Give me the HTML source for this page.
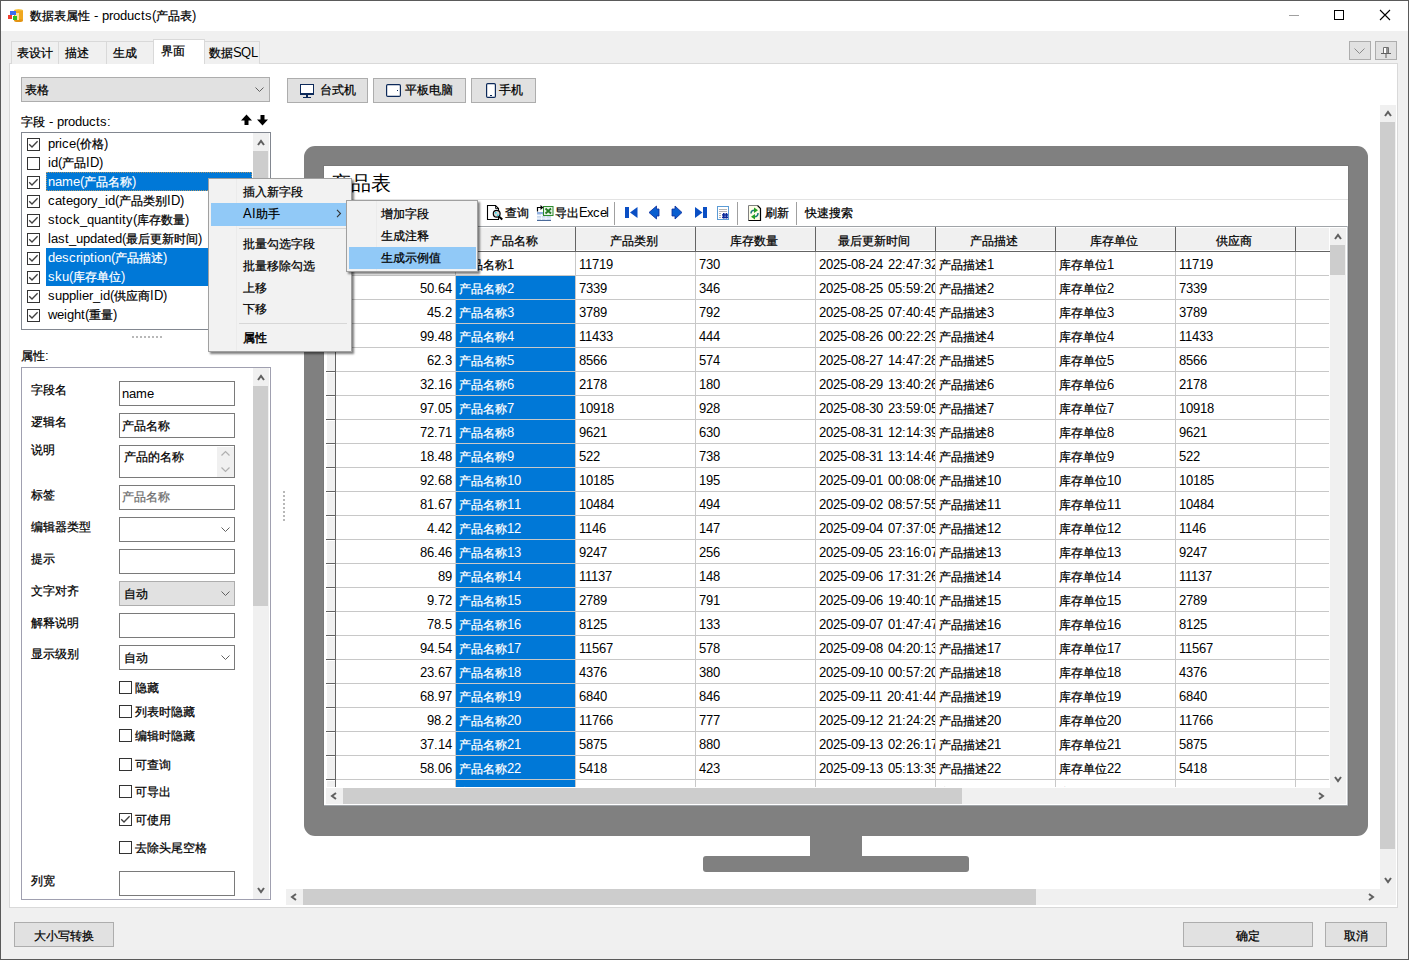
<!DOCTYPE html>
<html><head><meta charset="utf-8">
<style>
@font-face{font-family:"Liberation Sans";src:local("Liberation Sans"),local("LiberationSans");size-adjust:108%}
html,body{margin:0;padding:0}
body{width:1410px;height:962px;position:relative;overflow:hidden;background:#fff;font-family:"Liberation Sans",sans-serif;font-size:12px;color:#000}
div,svg,span{position:absolute;box-sizing:border-box}
.t{white-space:nowrap;line-height:12px;font-size:12px}
.c{position:relative;top:-0.5px;-webkit-text-stroke:0.25px currentColor}
.s{position:static}
</style></head><body>

<div style="left:0px;top:0px;width:1410px;height:962px;background:#fff"></div>
<div style="left:0px;top:0px;width:1409px;height:960px;background:#5a5a5a"></div>
<div style="left:1px;top:1px;width:1407px;height:30px;background:#fff"></div>
<div style="left:1px;top:31px;width:1407px;height:928px;background:#f0f0f0"></div>
<svg style="left:7px;top:8px" width="17" height="15">
<ellipse cx="11.5" cy="2.5" rx="4.5" ry="1.6" fill="#f7c84a"/>
<rect x="7" y="2.5" width="9" height="10" fill="#f0a820"/>
<ellipse cx="11.5" cy="12.5" rx="4.5" ry="1.6" fill="#e39412"/>
<rect x="8" y="5" width="4" height="7" fill="#fbe39a"/>
<rect x="3" y="3" width="6" height="4" fill="#3a6cf0"/>
<rect x="1" y="7" width="4" height="4" fill="#f04030"/>
<rect x="6" y="8" width="4" height="4" fill="#30c020"/>
</svg>
<span class="t" style="left:30px;top:10px;"><span class="c">数据表属性</span> - products(<span class="c">产品表</span>)</span>
<div style="left:1289px;top:15px;width:10px;height:1px;background:#a0a0a0"></div>
<div style="left:1334px;top:10px;width:10px;height:10px;border:1px solid #000"></div>
<svg style="left:1379px;top:9px" width="13" height="13"><path d="M1 1 L11 11 M11 1 L1 11" stroke="#000" stroke-width="1.1"/></svg>
<div style="left:9px;top:63px;width:1389px;height:845px;background:#fff;border:1px solid #d9d9d9"></div>
<div style="left:11px;top:41px;width:48px;height:23px;background:#f0f0f0;border:1px solid #d9d9d9;border-bottom:none"></div>
<span class="t" style="left:17px;top:47px;"><span class="c">表设计</span></span>
<div style="left:58px;top:41px;width:49px;height:23px;background:#f0f0f0;border:1px solid #d9d9d9;border-bottom:none"></div>
<span class="t" style="left:65px;top:47px;"><span class="c">描述</span></span>
<div style="left:106px;top:41px;width:48px;height:23px;background:#f0f0f0;border:1px solid #d9d9d9;border-bottom:none"></div>
<span class="t" style="left:113px;top:47px;"><span class="c">生成</span></span>
<div style="left:204px;top:41px;width:56px;height:23px;background:#f0f0f0;border:1px solid #d9d9d9;border-bottom:none"></div>
<span class="t" style="left:209px;top:47px;"><span class="c">数据</span><span class="s" style="letter-spacing:-0.6px">SQL</span></span>
<div style="left:153px;top:39px;width:52px;height:25px;background:#fff;border:1px solid #d9d9d9;border-bottom:none"></div>
<div style="left:154px;top:63px;width:50px;height:2px;background:#fff"></div>
<span class="t" style="left:161px;top:45px;"><span class="c">界面</span></span>
<div style="left:1349px;top:41px;width:22px;height:19px;background:#e1e1e1;border:1px solid #adadad"></div>
<svg style="left:1354px;top:48px" width="12" height="7"><path d="M0.5 0.5 L5.5 5.5 L10.5 0.5" fill="none" stroke="#8a8a8a" stroke-width="1"/></svg>
<div style="left:1375px;top:41px;width:22px;height:19px;background:#e1e1e1;border:1px solid #adadad"></div>
<svg style="left:1381px;top:47px" width="10" height="12"><path d="M2.5 0.5 H7.5 V6.5 H2.5 Z" fill="#fff" stroke="#707070"/><rect x="5" y="1" width="2" height="5" fill="#909090"/><path d="M0 6.5 H10 M5 6.5 V11" stroke="#606060" stroke-width="1"/></svg>
<div style="left:21px;top:77px;width:249px;height:25px;background:#e1e1e1;border:1px solid #adadad"></div>
<span class="t" style="left:25px;top:84px;"><span class="c">表格</span></span>
<svg style="left:255px;top:87px" width="9" height="5"><path d="M0.5 0.5 L4.5 4.5 L8.5 0.5" fill="none" stroke="#606060" stroke-width="1"/></svg>
<span class="t" style="left:21px;top:116px;"><span class="c">字段</span> - products:</span>
<svg style="left:240px;top:114px" width="30" height="12"><path d="M6.5 0.5 L12 6.5 H8.5 V11 H4.5 V6.5 H1 Z" fill="#000"/><path d="M22.5 11.5 L28 5.5 H24.5 V1 H20.5 V5.5 H17 Z" fill="#000"/></svg>
<div style="left:21px;top:132px;width:250px;height:198px;background:#fff;border:1px solid #828790"></div>
<div style="left:27px;top:138px;width:13px;height:13px;border:1px solid #333;background:#fff"></div>
<svg style="left:27px;top:138px" width="13" height="13"><path d="M2.2 6.2 L5 9 L10.6 3.2" fill="none" stroke="#404040" stroke-width="1.3"/></svg>
<span class="t" style="left:48px;top:138px;">price(<span class="c">价格</span>)</span>
<div style="left:27px;top:157px;width:13px;height:13px;border:1px solid #333;background:#fff"></div>
<span class="t" style="left:48px;top:157px;">id(<span class="c">产品</span>ID)</span>
<div style="left:46px;top:172px;width:206px;height:19px;background:#0078d7"></div>
<div style="left:27px;top:176px;width:13px;height:13px;border:1px solid #333;background:#fff"></div>
<svg style="left:27px;top:176px" width="13" height="13"><path d="M2.2 6.2 L5 9 L10.6 3.2" fill="none" stroke="#404040" stroke-width="1.3"/></svg>
<span class="t" style="left:48px;top:176px;color:#fff">name(<span class="c">产品名称</span>)</span>
<div style="left:27px;top:195px;width:13px;height:13px;border:1px solid #333;background:#fff"></div>
<svg style="left:27px;top:195px" width="13" height="13"><path d="M2.2 6.2 L5 9 L10.6 3.2" fill="none" stroke="#404040" stroke-width="1.3"/></svg>
<span class="t" style="left:48px;top:195px;">category_id(<span class="c">产品类别</span>ID)</span>
<div style="left:27px;top:214px;width:13px;height:13px;border:1px solid #333;background:#fff"></div>
<svg style="left:27px;top:214px" width="13" height="13"><path d="M2.2 6.2 L5 9 L10.6 3.2" fill="none" stroke="#404040" stroke-width="1.3"/></svg>
<span class="t" style="left:48px;top:214px;">stock_quantity(<span class="c">库存数量</span>)</span>
<div style="left:27px;top:233px;width:13px;height:13px;border:1px solid #333;background:#fff"></div>
<svg style="left:27px;top:233px" width="13" height="13"><path d="M2.2 6.2 L5 9 L10.6 3.2" fill="none" stroke="#404040" stroke-width="1.3"/></svg>
<span class="t" style="left:48px;top:233px;">last_updated(<span class="c">最后更新时间</span>)</span>
<div style="left:46px;top:248px;width:206px;height:19px;background:#0078d7"></div>
<div style="left:27px;top:252px;width:13px;height:13px;border:1px solid #333;background:#fff"></div>
<svg style="left:27px;top:252px" width="13" height="13"><path d="M2.2 6.2 L5 9 L10.6 3.2" fill="none" stroke="#404040" stroke-width="1.3"/></svg>
<span class="t" style="left:48px;top:252px;color:#fff">description(<span class="c">产品描述</span>)</span>
<div style="left:46px;top:267px;width:206px;height:19px;background:#0078d7"></div>
<div style="left:27px;top:271px;width:13px;height:13px;border:1px solid #333;background:#fff"></div>
<svg style="left:27px;top:271px" width="13" height="13"><path d="M2.2 6.2 L5 9 L10.6 3.2" fill="none" stroke="#404040" stroke-width="1.3"/></svg>
<span class="t" style="left:48px;top:271px;color:#fff">sku(<span class="c">库存单位</span>)</span>
<div style="left:27px;top:290px;width:13px;height:13px;border:1px solid #333;background:#fff"></div>
<svg style="left:27px;top:290px" width="13" height="13"><path d="M2.2 6.2 L5 9 L10.6 3.2" fill="none" stroke="#404040" stroke-width="1.3"/></svg>
<span class="t" style="left:48px;top:290px;">supplier_id(<span class="c">供应商</span>ID)</span>
<div style="left:27px;top:309px;width:13px;height:13px;border:1px solid #333;background:#fff"></div>
<svg style="left:27px;top:309px" width="13" height="13"><path d="M2.2 6.2 L5 9 L10.6 3.2" fill="none" stroke="#404040" stroke-width="1.3"/></svg>
<span class="t" style="left:48px;top:309px;">weight(<span class="c">重量</span>)</span>
<div style="left:46px;top:172px;width:206px;height:19px;border:1px dotted #f0a040;opacity:.7"></div>
<div style="left:253px;top:133px;width:16px;height:196px;background:#f0f0f0"></div>
<div style="left:253px;top:151px;width:15px;height:178px;background:#cdcdcd"></div>
<svg style="left:253px;top:134px" width="16" height="16"><path d="M5 11 L8 7 L11 11" fill="none" stroke="#606060" stroke-width="2"/></svg>
<div style="left:132px;top:336px;width:30px;height:2px;background:repeating-linear-gradient(90deg,#b8b8b8 0 2px,transparent 2px 4px)"></div>
<span class="t" style="left:21px;top:350px;"><span class="c">属性</span>:</span>
<div style="left:21px;top:367px;width:250px;height:533px;background:#fff;border:1px solid #a0a0b0"></div>
<div style="left:253px;top:368px;width:16px;height:531px;background:#f0f0f0"></div>
<div style="left:253px;top:386px;width:15px;height:220px;background:#cdcdcd"></div>
<svg style="left:253px;top:369px" width="16" height="16"><path d="M5 11 L8 7 L11 11" fill="none" stroke="#606060" stroke-width="2"/></svg>
<svg style="left:253px;top:881px" width="16" height="16"><path d="M5 7 L8 11 L11 7" fill="none" stroke="#606060" stroke-width="2"/></svg>
<span class="t" style="left:31px;top:384px;"><span class="c">字段名</span></span>
<span class="t" style="left:31px;top:416px;"><span class="c">逻辑名</span></span>
<span class="t" style="left:31px;top:444px;"><span class="c">说明</span></span>
<span class="t" style="left:31px;top:489px;"><span class="c">标签</span></span>
<span class="t" style="left:31px;top:521px;"><span class="c">编辑器类型</span></span>
<span class="t" style="left:31px;top:553px;"><span class="c">提示</span></span>
<span class="t" style="left:31px;top:585px;"><span class="c">文字对齐</span></span>
<span class="t" style="left:31px;top:617px;"><span class="c">解释说明</span></span>
<span class="t" style="left:31px;top:648px;"><span class="c">显示级别</span></span>
<span class="t" style="left:31px;top:875px;"><span class="c">列宽</span></span>
<div style="left:119px;top:381px;width:116px;height:25px;background:#fff;border:1px solid #7a7a7a"></div>
<span class="t" style="left:122px;top:388px;">name</span>
<div style="left:119px;top:413px;width:116px;height:25px;background:#fff;border:1px solid #7a7a7a"></div>
<span class="t" style="left:122px;top:420px;"><span class="c">产品名称</span></span>
<div style="left:119px;top:445px;width:116px;height:33px;background:#fff;border:1px solid #7a7a7a"></div>
<span class="t" style="left:124px;top:451px;"><span class="c">产品的名称</span></span>
<div style="left:217px;top:447px;width:17px;height:30px;background:#f0f0f0"></div>
<svg style="left:217px;top:447px" width="17" height="30"><path d="M4.5 8.5 L8.5 4.5 L12.5 8.5 M4.5 20.5 L8.5 24.5 L12.5 20.5" fill="none" stroke="#b0b0b0" stroke-width="1.2"/></svg>
<div style="left:119px;top:485px;width:116px;height:25px;background:#fff;border:1px solid #7a7a7a"></div>
<span class="t" style="left:122px;top:491px;color:#6d6d6d"><span class="c">产品名称</span></span>
<div style="left:119px;top:517px;width:116px;height:25px;background:#fff;border:1px solid #7a7a7a"></div>
<svg style="left:221px;top:527px" width="9" height="5"><path d="M0.5 0.5 L4.5 4.5 L8.5 0.5" fill="none" stroke="#606060" stroke-width="1"/></svg>
<div style="left:119px;top:549px;width:116px;height:25px;background:#fff;border:1px solid #7a7a7a"></div>
<div style="left:119px;top:581px;width:116px;height:25px;background:#e1e1e1;border:1px solid #adadad"></div>
<span class="t" style="left:124px;top:588px;"><span class="c">自动</span></span>
<svg style="left:221px;top:591px" width="9" height="5"><path d="M0.5 0.5 L4.5 4.5 L8.5 0.5" fill="none" stroke="#606060" stroke-width="1"/></svg>
<div style="left:119px;top:613px;width:116px;height:25px;background:#fff;border:1px solid #7a7a7a"></div>
<div style="left:119px;top:645px;width:116px;height:25px;background:#fff;border:1px solid #7a7a7a"></div>
<span class="t" style="left:124px;top:652px;"><span class="c">自动</span></span>
<svg style="left:221px;top:655px" width="9" height="5"><path d="M0.5 0.5 L4.5 4.5 L8.5 0.5" fill="none" stroke="#606060" stroke-width="1"/></svg>
<div style="left:119px;top:681px;width:13px;height:13px;border:1px solid #333;background:#fff"></div>
<span class="t" style="left:135px;top:682px;"><span class="c">隐藏</span></span>
<div style="left:119px;top:705px;width:13px;height:13px;border:1px solid #333;background:#fff"></div>
<span class="t" style="left:135px;top:706px;"><span class="c">列表时隐藏</span></span>
<div style="left:119px;top:729px;width:13px;height:13px;border:1px solid #333;background:#fff"></div>
<span class="t" style="left:135px;top:730px;"><span class="c">编辑时隐藏</span></span>
<div style="left:119px;top:758px;width:13px;height:13px;border:1px solid #333;background:#fff"></div>
<span class="t" style="left:135px;top:759px;"><span class="c">可查询</span></span>
<div style="left:119px;top:785px;width:13px;height:13px;border:1px solid #333;background:#fff"></div>
<span class="t" style="left:135px;top:786px;"><span class="c">可导出</span></span>
<div style="left:119px;top:813px;width:13px;height:13px;border:1px solid #333;background:#fff"></div>
<svg style="left:119px;top:813px" width="13" height="13"><path d="M2.2 6.2 L5 9 L10.6 3.2" fill="none" stroke="#404040" stroke-width="1.3"/></svg>
<span class="t" style="left:135px;top:814px;"><span class="c">可使用</span></span>
<div style="left:119px;top:841px;width:13px;height:13px;border:1px solid #333;background:#fff"></div>
<span class="t" style="left:135px;top:842px;"><span class="c">去除头尾空格</span></span>
<div style="left:119px;top:871px;width:116px;height:25px;background:#fff;border:1px solid #7a7a7a"></div>
<div style="left:14px;top:922px;width:100px;height:25px;background:#e1e1e1;border:1px solid #adadad"></div>
<span class="t" style="left:34px;top:930px;"><span class="c">大小写转换</span></span>
<div style="left:1183px;top:922px;width:130px;height:25px;background:#e1e1e1;border:1px solid #adadad"></div>
<span class="t" style="left:1236px;top:930px;"><span class="c">确定</span></span>
<div style="left:1325px;top:922px;width:62px;height:25px;background:#e1e1e1;border:1px solid #adadad"></div>
<span class="t" style="left:1344px;top:930px;"><span class="c">取消</span></span>
<div style="left:283px;top:491px;width:2px;height:30px;background:repeating-linear-gradient(180deg,#b8b8b8 0 2px,transparent 2px 4px)"></div>
<div style="left:287px;top:78px;width:81px;height:25px;background:#e1e1e1;border:1px solid #adadad"></div>
<svg style="left:300px;top:84px" width="14" height="14"><rect x="0" y="0" width="14" height="11" fill="#0d2a5a"/><rect x="1" y="1" width="12" height="8" fill="#fff"/><rect x="6" y="11" width="2" height="2" fill="#0d2a5a"/><rect x="3" y="13" width="8" height="1" fill="#0d2a5a"/></svg>
<span class="t" style="left:320px;top:84px;"><span class="c">台式机</span></span>
<div style="left:373px;top:78px;width:93px;height:25px;background:#e1e1e1;border:1px solid #adadad"></div>
<svg style="left:386px;top:84px" width="15" height="13"><rect x="0.6" y="0.6" width="13.8" height="11.8" rx="1.2" fill="#fff" stroke="#0d2a5a" stroke-width="1.2"/><rect x="11" y="6" width="1" height="1" fill="#0d2a5a"/></svg>
<span class="t" style="left:405px;top:84px;"><span class="c">平板电脑</span></span>
<div style="left:471px;top:78px;width:65px;height:25px;background:#e1e1e1;border:1px solid #adadad"></div>
<svg style="left:486px;top:83px" width="10" height="15"><rect x="0.6" y="0.6" width="8.8" height="13.8" rx="1.2" fill="#fff" stroke="#0d2a5a" stroke-width="1.2"/><rect x="4" y="12" width="2" height="1" fill="#0d2a5a"/></svg>
<span class="t" style="left:499px;top:84px;"><span class="c">手机</span></span>
<div style="left:1380px;top:105px;width:16px;height:784px;background:#f0f0f0"></div>
<div style="left:1380px;top:122px;width:15px;height:727px;background:#cdcdcd"></div>
<svg style="left:1380px;top:105px" width="16" height="16"><path d="M5 11 L8 7 L11 11" fill="none" stroke="#606060" stroke-width="2"/></svg>
<svg style="left:1380px;top:871px" width="16" height="16"><path d="M5 7 L8 11 L11 7" fill="none" stroke="#606060" stroke-width="2"/></svg>
<div style="left:286px;top:889px;width:1110px;height:16px;background:#f0f0f0"></div>
<div style="left:303px;top:889px;width:733px;height:16px;background:#cdcdcd"></div>
<svg style="left:285px;top:889px" width="16" height="16"><path d="M11 5 L7 8 L11 11" fill="none" stroke="#606060" stroke-width="2"/></svg>
<svg style="left:1364px;top:889px" width="16" height="16"><path d="M5 5 L9 8 L5 11" fill="none" stroke="#606060" stroke-width="2"/></svg>
<div style="left:304px;top:146px;width:1064px;height:690px;background:#808080;border-radius:11px"></div>
<div style="left:810px;top:836px;width:52px;height:21px;background:#808080"></div>
<div style="left:703px;top:856px;width:266px;height:16px;background:#808080;border-radius:3px"></div>
<div style="left:323px;top:165px;width:1026px;height:641px;background:#787878"></div>
<div style="left:324px;top:805px;width:1024px;height:1px;background:#a0a4a8"></div>
<div style="left:324px;top:166px;width:1024px;height:639px;background:#fff"></div>
<span class="t" style="left:331px;top:173px;font-size:20px;line-height:20px">产品表</span>
<div style="left:324px;top:199px;width:1024px;height:1px;background:#e3e3e3"></div>
<svg style="left:486px;top:204px" width="18" height="17">
<path d="M1.5 1.5 H9.5 L12.5 4.5 V15.5 H1.5 Z" fill="#fff" stroke="#000" stroke-width="1.1"/>
<path d="M9.5 1.5 V4.5 H12.5" fill="none" stroke="#000" stroke-width="0.8"/>
<circle cx="10.7" cy="9.7" r="3.4" fill="#d4d4d4" stroke="#000" stroke-width="1.2"/>
<rect x="9" y="8" width="1.5" height="1.5" fill="#20e0f0"/><rect x="11" y="10.5" width="1.5" height="1.5" fill="#20e0f0"/>
<path d="M13.2 12.8 L16.3 15.6" stroke="#000" stroke-width="2"/>
</svg>
<span class="t" style="left:505px;top:207px;"><span class="c">查询</span></span>
<svg style="left:536px;top:204px" width="18" height="18">
<rect x="1" y="8" width="14" height="9" fill="#c9d9ee"/>
<rect x="1" y="8" width="14" height="2" fill="#8fb0e0"/>
<path d="M1 11.5 H15 M1 14.2 H15 M5.5 10 V17 M10 10 V17" stroke="#f4f8ff" stroke-width="1"/>
<rect x="1" y="16" width="14" height="1" fill="#4a6a9a"/>
<rect x="7.5" y="2.5" width="9.5" height="9" fill="#e6f3e6" stroke="#2e8b2e" stroke-width="1"/>
<path d="M9.5 4.5 L15 9.5 M15 4.5 L9.5 9.5" stroke="#237a23" stroke-width="1.8"/>
<path d="M1.5 7.5 V3.5 H5" fill="none" stroke="#000" stroke-width="1.2"/>
<path d="M4.5 1 L7.5 3.5 L4.5 6 Z" fill="#000"/>
</svg>
<span class="t" style="left:555px;top:207px;"><span class="c">导出</span><span class="s" style="letter-spacing:-0.8px">Excel</span></span>
<div style="left:614px;top:202px;width:1px;height:23px;background:#a0a0a0"></div>
<svg style="left:624px;top:205px" width="110" height="17">
<rect x="1" y="2" width="4" height="11" fill="#0a4fc4"/><path d="M13.5 2 V13 L6 7.5 Z" fill="#0a4fc4"/>
<path d="M25 7.5 L32.5 1 V4 H35 V11 H32.5 V14 Z" fill="#0a5fd0" stroke="#0a2a9a" stroke-width="0.8"/>
<path d="M58 7.5 L51 1 V4 H48 V11 H51 V14 Z" fill="#0a5fd0" stroke="#0a2a9a" stroke-width="0.8"/>
<path d="M71 2 V13 L78.5 7.5 Z" fill="#0a4fc4"/><rect x="79" y="2" width="4" height="11" fill="#0a4fc4"/>
</svg>
<svg style="left:717px;top:206px" width="12" height="14">
<rect x="0.5" y="0.5" width="11" height="13" fill="#fff" stroke="#5b9bd5" stroke-width="1"/>
<rect x="2" y="3" width="8" height="1" fill="#b4b4b4"/><rect x="2" y="5" width="8" height="1" fill="#b4b4b4"/>
<rect x="2" y="7" width="2" height="1" fill="#b4b4b4"/><rect x="2" y="9" width="2" height="1" fill="#b4b4b4"/><rect x="2" y="11" width="2" height="1" fill="#b4b4b4"/>
<rect x="6" y="7" width="1.6" height="5.5" fill="#0a2a9a"/><rect x="8.6" y="7" width="1.6" height="5.5" fill="#0a2a9a"/>
<rect x="5" y="8.2" width="6" height="1.5" fill="#0a2a9a"/><rect x="5" y="10.6" width="6" height="1.5" fill="#0a2a9a"/>
</svg>
<div style="left:737px;top:202px;width:1px;height:23px;background:#a0a0a0"></div>
<svg style="left:748px;top:205px" width="14" height="17">
<path d="M0.5 0.5 H9.5 L12.5 3.5 V15.5 H0.5 Z" fill="#fdfde8"/>
<path d="M0.5 15.5 V0.5 H9.5" fill="none" stroke="#808080" stroke-width="1"/>
<path d="M9.5 0.5 L12.5 3.5 V15.5 H0.5" fill="none" stroke="#000" stroke-width="1.2"/>
<path d="M3 8.5 Q3 5.3 6.5 5.3" fill="none" stroke="#1a7a7a" stroke-width="1.5"/>
<path d="M6 2.5 L10 5.3 L6 8 Z" fill="#22a022"/>
<path d="M10 8 Q10 11.7 6.5 11.7" fill="none" stroke="#1a7a7a" stroke-width="1.5"/>
<path d="M7 9 L3 11.7 L7 14.5 Z" fill="#22a022"/>
</svg>
<span class="t" style="left:765px;top:207px;"><span class="c">刷新</span></span>
<div style="left:796px;top:202px;width:1px;height:23px;background:#a0a0a0"></div>
<span class="t" style="left:805px;top:207px;"><span class="c">快速搜索</span></span>
<div style="left:325px;top:226px;width:1023px;height:1px;background:#a0a4a8"></div>
<div style="left:1347px;top:226px;width:1px;height:579px;background:#c0c4c8"></div>
<div style="left:326px;top:227px;width:1004px;height:560px;overflow:hidden;background:#fff">
<div style="left:1px;top:1px;width:1002px;height:22px;background:#f0f0f0"></div>
<div style="left:0px;top:24px;width:1004px;height:1px;background:#646464"></div>
<div style="left:9px;top:0px;width:1px;height:560px;background:#646464"></div>
<div style="left:129px;top:0px;width:1px;height:24px;background:#646464"></div>
<div style="left:129px;top:25px;width:1px;height:535px;background:#c8c8c8"></div>
<div style="left:249px;top:0px;width:1px;height:24px;background:#646464"></div>
<div style="left:249px;top:25px;width:1px;height:535px;background:#c8c8c8"></div>
<div style="left:369px;top:0px;width:1px;height:24px;background:#646464"></div>
<div style="left:369px;top:25px;width:1px;height:535px;background:#c8c8c8"></div>
<div style="left:489px;top:0px;width:1px;height:24px;background:#646464"></div>
<div style="left:489px;top:25px;width:1px;height:535px;background:#c8c8c8"></div>
<div style="left:609px;top:0px;width:1px;height:24px;background:#646464"></div>
<div style="left:609px;top:25px;width:1px;height:535px;background:#c8c8c8"></div>
<div style="left:729px;top:0px;width:1px;height:24px;background:#646464"></div>
<div style="left:729px;top:25px;width:1px;height:535px;background:#c8c8c8"></div>
<div style="left:849px;top:0px;width:1px;height:24px;background:#646464"></div>
<div style="left:849px;top:25px;width:1px;height:535px;background:#c8c8c8"></div>
<div style="left:969px;top:0px;width:1px;height:24px;background:#646464"></div>
<div style="left:969px;top:25px;width:1px;height:535px;background:#c8c8c8"></div>
<div style="left:10px;top:48px;width:993px;height:1px;background:#c8c8c8"></div>
<div style="left:1px;top:26px;width:8px;height:22px;background:#f0f0f0"></div>
<div style="left:0px;top:48px;width:10px;height:1px;background:#646464"></div>
<span class="t" style="left:133px;top:32px;"><span class="c">产品名称</span>1</span>
<span class="t" style="left:253px;top:32px;">11719</span>
<span class="t" style="left:373px;top:32px;">730</span>
<div style="left:490px;top:30px;width:119px;height:16px;overflow:hidden"><span class="t" style="left:3px;top:2px;word-spacing:0.8px">2025-08-24 22:47:32</span></div>
<span class="t" style="left:613px;top:32px;"><span class="c">产品描述</span>1</span>
<span class="t" style="left:733px;top:32px;"><span class="c">库存单位</span>1</span>
<span class="t" style="left:853px;top:32px;">11719</span>
<div style="left:10px;top:72px;width:993px;height:1px;background:#c8c8c8"></div>
<div style="left:1px;top:50px;width:8px;height:22px;background:#f0f0f0"></div>
<div style="left:0px;top:72px;width:10px;height:1px;background:#646464"></div>
<div style="left:130px;top:49px;width:119px;height:23px;background:#0078d7"></div>
<span class="t" style="left:10px;top:56px;width:116px;text-align:right">50.64</span>
<span class="t" style="left:133px;top:56px;color:#fff"><span class="c">产品名称</span>2</span>
<span class="t" style="left:253px;top:56px;">7339</span>
<span class="t" style="left:373px;top:56px;">346</span>
<div style="left:490px;top:54px;width:119px;height:16px;overflow:hidden"><span class="t" style="left:3px;top:2px;word-spacing:0.8px">2025-08-25 05:59:20</span></div>
<span class="t" style="left:613px;top:56px;"><span class="c">产品描述</span>2</span>
<span class="t" style="left:733px;top:56px;"><span class="c">库存单位</span>2</span>
<span class="t" style="left:853px;top:56px;">7339</span>
<div style="left:10px;top:96px;width:993px;height:1px;background:#c8c8c8"></div>
<div style="left:1px;top:74px;width:8px;height:22px;background:#f0f0f0"></div>
<div style="left:0px;top:96px;width:10px;height:1px;background:#646464"></div>
<div style="left:130px;top:73px;width:119px;height:23px;background:#0078d7"></div>
<span class="t" style="left:10px;top:80px;width:116px;text-align:right">45.2</span>
<span class="t" style="left:133px;top:80px;color:#fff"><span class="c">产品名称</span>3</span>
<span class="t" style="left:253px;top:80px;">3789</span>
<span class="t" style="left:373px;top:80px;">792</span>
<div style="left:490px;top:78px;width:119px;height:16px;overflow:hidden"><span class="t" style="left:3px;top:2px;word-spacing:0.8px">2025-08-25 07:40:45</span></div>
<span class="t" style="left:613px;top:80px;"><span class="c">产品描述</span>3</span>
<span class="t" style="left:733px;top:80px;"><span class="c">库存单位</span>3</span>
<span class="t" style="left:853px;top:80px;">3789</span>
<div style="left:10px;top:120px;width:993px;height:1px;background:#c8c8c8"></div>
<div style="left:1px;top:98px;width:8px;height:22px;background:#f0f0f0"></div>
<div style="left:0px;top:120px;width:10px;height:1px;background:#646464"></div>
<div style="left:130px;top:97px;width:119px;height:23px;background:#0078d7"></div>
<span class="t" style="left:10px;top:104px;width:116px;text-align:right">99.48</span>
<span class="t" style="left:133px;top:104px;color:#fff"><span class="c">产品名称</span>4</span>
<span class="t" style="left:253px;top:104px;">11433</span>
<span class="t" style="left:373px;top:104px;">444</span>
<div style="left:490px;top:102px;width:119px;height:16px;overflow:hidden"><span class="t" style="left:3px;top:2px;word-spacing:0.8px">2025-08-26 00:22:29</span></div>
<span class="t" style="left:613px;top:104px;"><span class="c">产品描述</span>4</span>
<span class="t" style="left:733px;top:104px;"><span class="c">库存单位</span>4</span>
<span class="t" style="left:853px;top:104px;">11433</span>
<div style="left:10px;top:144px;width:993px;height:1px;background:#c8c8c8"></div>
<div style="left:1px;top:122px;width:8px;height:22px;background:#f0f0f0"></div>
<div style="left:0px;top:144px;width:10px;height:1px;background:#646464"></div>
<div style="left:130px;top:121px;width:119px;height:23px;background:#0078d7"></div>
<span class="t" style="left:10px;top:128px;width:116px;text-align:right">62.3</span>
<span class="t" style="left:133px;top:128px;color:#fff"><span class="c">产品名称</span>5</span>
<span class="t" style="left:253px;top:128px;">8566</span>
<span class="t" style="left:373px;top:128px;">574</span>
<div style="left:490px;top:126px;width:119px;height:16px;overflow:hidden"><span class="t" style="left:3px;top:2px;word-spacing:0.8px">2025-08-27 14:47:28</span></div>
<span class="t" style="left:613px;top:128px;"><span class="c">产品描述</span>5</span>
<span class="t" style="left:733px;top:128px;"><span class="c">库存单位</span>5</span>
<span class="t" style="left:853px;top:128px;">8566</span>
<div style="left:10px;top:168px;width:993px;height:1px;background:#c8c8c8"></div>
<div style="left:1px;top:146px;width:8px;height:22px;background:#f0f0f0"></div>
<div style="left:0px;top:168px;width:10px;height:1px;background:#646464"></div>
<div style="left:130px;top:145px;width:119px;height:23px;background:#0078d7"></div>
<span class="t" style="left:10px;top:152px;width:116px;text-align:right">32.16</span>
<span class="t" style="left:133px;top:152px;color:#fff"><span class="c">产品名称</span>6</span>
<span class="t" style="left:253px;top:152px;">2178</span>
<span class="t" style="left:373px;top:152px;">180</span>
<div style="left:490px;top:150px;width:119px;height:16px;overflow:hidden"><span class="t" style="left:3px;top:2px;word-spacing:0.8px">2025-08-29 13:40:26</span></div>
<span class="t" style="left:613px;top:152px;"><span class="c">产品描述</span>6</span>
<span class="t" style="left:733px;top:152px;"><span class="c">库存单位</span>6</span>
<span class="t" style="left:853px;top:152px;">2178</span>
<div style="left:10px;top:192px;width:993px;height:1px;background:#c8c8c8"></div>
<div style="left:1px;top:170px;width:8px;height:22px;background:#f0f0f0"></div>
<div style="left:0px;top:192px;width:10px;height:1px;background:#646464"></div>
<div style="left:130px;top:169px;width:119px;height:23px;background:#0078d7"></div>
<span class="t" style="left:10px;top:176px;width:116px;text-align:right">97.05</span>
<span class="t" style="left:133px;top:176px;color:#fff"><span class="c">产品名称</span>7</span>
<span class="t" style="left:253px;top:176px;">10918</span>
<span class="t" style="left:373px;top:176px;">928</span>
<div style="left:490px;top:174px;width:119px;height:16px;overflow:hidden"><span class="t" style="left:3px;top:2px;word-spacing:0.8px">2025-08-30 23:59:05</span></div>
<span class="t" style="left:613px;top:176px;"><span class="c">产品描述</span>7</span>
<span class="t" style="left:733px;top:176px;"><span class="c">库存单位</span>7</span>
<span class="t" style="left:853px;top:176px;">10918</span>
<div style="left:10px;top:216px;width:993px;height:1px;background:#c8c8c8"></div>
<div style="left:1px;top:194px;width:8px;height:22px;background:#f0f0f0"></div>
<div style="left:0px;top:216px;width:10px;height:1px;background:#646464"></div>
<div style="left:130px;top:193px;width:119px;height:23px;background:#0078d7"></div>
<span class="t" style="left:10px;top:200px;width:116px;text-align:right">72.71</span>
<span class="t" style="left:133px;top:200px;color:#fff"><span class="c">产品名称</span>8</span>
<span class="t" style="left:253px;top:200px;">9621</span>
<span class="t" style="left:373px;top:200px;">630</span>
<div style="left:490px;top:198px;width:119px;height:16px;overflow:hidden"><span class="t" style="left:3px;top:2px;word-spacing:0.8px">2025-08-31 12:14:39</span></div>
<span class="t" style="left:613px;top:200px;"><span class="c">产品描述</span>8</span>
<span class="t" style="left:733px;top:200px;"><span class="c">库存单位</span>8</span>
<span class="t" style="left:853px;top:200px;">9621</span>
<div style="left:10px;top:240px;width:993px;height:1px;background:#c8c8c8"></div>
<div style="left:1px;top:218px;width:8px;height:22px;background:#f0f0f0"></div>
<div style="left:0px;top:240px;width:10px;height:1px;background:#646464"></div>
<div style="left:130px;top:217px;width:119px;height:23px;background:#0078d7"></div>
<span class="t" style="left:10px;top:224px;width:116px;text-align:right">18.48</span>
<span class="t" style="left:133px;top:224px;color:#fff"><span class="c">产品名称</span>9</span>
<span class="t" style="left:253px;top:224px;">522</span>
<span class="t" style="left:373px;top:224px;">738</span>
<div style="left:490px;top:222px;width:119px;height:16px;overflow:hidden"><span class="t" style="left:3px;top:2px;word-spacing:0.8px">2025-08-31 13:14:46</span></div>
<span class="t" style="left:613px;top:224px;"><span class="c">产品描述</span>9</span>
<span class="t" style="left:733px;top:224px;"><span class="c">库存单位</span>9</span>
<span class="t" style="left:853px;top:224px;">522</span>
<div style="left:10px;top:264px;width:993px;height:1px;background:#c8c8c8"></div>
<div style="left:1px;top:242px;width:8px;height:22px;background:#f0f0f0"></div>
<div style="left:0px;top:264px;width:10px;height:1px;background:#646464"></div>
<div style="left:130px;top:241px;width:119px;height:23px;background:#0078d7"></div>
<span class="t" style="left:10px;top:248px;width:116px;text-align:right">92.68</span>
<span class="t" style="left:133px;top:248px;color:#fff"><span class="c">产品名称</span>10</span>
<span class="t" style="left:253px;top:248px;">10185</span>
<span class="t" style="left:373px;top:248px;">195</span>
<div style="left:490px;top:246px;width:119px;height:16px;overflow:hidden"><span class="t" style="left:3px;top:2px;word-spacing:0.8px">2025-09-01 00:08:06</span></div>
<span class="t" style="left:613px;top:248px;"><span class="c">产品描述</span>10</span>
<span class="t" style="left:733px;top:248px;"><span class="c">库存单位</span>10</span>
<span class="t" style="left:853px;top:248px;">10185</span>
<div style="left:10px;top:288px;width:993px;height:1px;background:#c8c8c8"></div>
<div style="left:1px;top:266px;width:8px;height:22px;background:#f0f0f0"></div>
<div style="left:0px;top:288px;width:10px;height:1px;background:#646464"></div>
<div style="left:130px;top:265px;width:119px;height:23px;background:#0078d7"></div>
<span class="t" style="left:10px;top:272px;width:116px;text-align:right">81.67</span>
<span class="t" style="left:133px;top:272px;color:#fff"><span class="c">产品名称</span>11</span>
<span class="t" style="left:253px;top:272px;">10484</span>
<span class="t" style="left:373px;top:272px;">494</span>
<div style="left:490px;top:270px;width:119px;height:16px;overflow:hidden"><span class="t" style="left:3px;top:2px;word-spacing:0.8px">2025-09-02 08:57:55</span></div>
<span class="t" style="left:613px;top:272px;"><span class="c">产品描述</span>11</span>
<span class="t" style="left:733px;top:272px;"><span class="c">库存单位</span>11</span>
<span class="t" style="left:853px;top:272px;">10484</span>
<div style="left:10px;top:312px;width:993px;height:1px;background:#c8c8c8"></div>
<div style="left:1px;top:290px;width:8px;height:22px;background:#f0f0f0"></div>
<div style="left:0px;top:312px;width:10px;height:1px;background:#646464"></div>
<div style="left:130px;top:289px;width:119px;height:23px;background:#0078d7"></div>
<span class="t" style="left:10px;top:296px;width:116px;text-align:right">4.42</span>
<span class="t" style="left:133px;top:296px;color:#fff"><span class="c">产品名称</span>12</span>
<span class="t" style="left:253px;top:296px;">1146</span>
<span class="t" style="left:373px;top:296px;">147</span>
<div style="left:490px;top:294px;width:119px;height:16px;overflow:hidden"><span class="t" style="left:3px;top:2px;word-spacing:0.8px">2025-09-04 07:37:05</span></div>
<span class="t" style="left:613px;top:296px;"><span class="c">产品描述</span>12</span>
<span class="t" style="left:733px;top:296px;"><span class="c">库存单位</span>12</span>
<span class="t" style="left:853px;top:296px;">1146</span>
<div style="left:10px;top:336px;width:993px;height:1px;background:#c8c8c8"></div>
<div style="left:1px;top:314px;width:8px;height:22px;background:#f0f0f0"></div>
<div style="left:0px;top:336px;width:10px;height:1px;background:#646464"></div>
<div style="left:130px;top:313px;width:119px;height:23px;background:#0078d7"></div>
<span class="t" style="left:10px;top:320px;width:116px;text-align:right">86.46</span>
<span class="t" style="left:133px;top:320px;color:#fff"><span class="c">产品名称</span>13</span>
<span class="t" style="left:253px;top:320px;">9247</span>
<span class="t" style="left:373px;top:320px;">256</span>
<div style="left:490px;top:318px;width:119px;height:16px;overflow:hidden"><span class="t" style="left:3px;top:2px;word-spacing:0.8px">2025-09-05 23:16:07</span></div>
<span class="t" style="left:613px;top:320px;"><span class="c">产品描述</span>13</span>
<span class="t" style="left:733px;top:320px;"><span class="c">库存单位</span>13</span>
<span class="t" style="left:853px;top:320px;">9247</span>
<div style="left:10px;top:360px;width:993px;height:1px;background:#c8c8c8"></div>
<div style="left:1px;top:338px;width:8px;height:22px;background:#f0f0f0"></div>
<div style="left:0px;top:360px;width:10px;height:1px;background:#646464"></div>
<div style="left:130px;top:337px;width:119px;height:23px;background:#0078d7"></div>
<span class="t" style="left:10px;top:344px;width:116px;text-align:right">89</span>
<span class="t" style="left:133px;top:344px;color:#fff"><span class="c">产品名称</span>14</span>
<span class="t" style="left:253px;top:344px;">11137</span>
<span class="t" style="left:373px;top:344px;">148</span>
<div style="left:490px;top:342px;width:119px;height:16px;overflow:hidden"><span class="t" style="left:3px;top:2px;word-spacing:0.8px">2025-09-06 17:31:26</span></div>
<span class="t" style="left:613px;top:344px;"><span class="c">产品描述</span>14</span>
<span class="t" style="left:733px;top:344px;"><span class="c">库存单位</span>14</span>
<span class="t" style="left:853px;top:344px;">11137</span>
<div style="left:10px;top:384px;width:993px;height:1px;background:#c8c8c8"></div>
<div style="left:1px;top:362px;width:8px;height:22px;background:#f0f0f0"></div>
<div style="left:0px;top:384px;width:10px;height:1px;background:#646464"></div>
<div style="left:130px;top:361px;width:119px;height:23px;background:#0078d7"></div>
<span class="t" style="left:10px;top:368px;width:116px;text-align:right">9.72</span>
<span class="t" style="left:133px;top:368px;color:#fff"><span class="c">产品名称</span>15</span>
<span class="t" style="left:253px;top:368px;">2789</span>
<span class="t" style="left:373px;top:368px;">791</span>
<div style="left:490px;top:366px;width:119px;height:16px;overflow:hidden"><span class="t" style="left:3px;top:2px;word-spacing:0.8px">2025-09-06 19:40:10</span></div>
<span class="t" style="left:613px;top:368px;"><span class="c">产品描述</span>15</span>
<span class="t" style="left:733px;top:368px;"><span class="c">库存单位</span>15</span>
<span class="t" style="left:853px;top:368px;">2789</span>
<div style="left:10px;top:408px;width:993px;height:1px;background:#c8c8c8"></div>
<div style="left:1px;top:386px;width:8px;height:22px;background:#f0f0f0"></div>
<div style="left:0px;top:408px;width:10px;height:1px;background:#646464"></div>
<div style="left:130px;top:385px;width:119px;height:23px;background:#0078d7"></div>
<span class="t" style="left:10px;top:392px;width:116px;text-align:right">78.5</span>
<span class="t" style="left:133px;top:392px;color:#fff"><span class="c">产品名称</span>16</span>
<span class="t" style="left:253px;top:392px;">8125</span>
<span class="t" style="left:373px;top:392px;">133</span>
<div style="left:490px;top:390px;width:119px;height:16px;overflow:hidden"><span class="t" style="left:3px;top:2px;word-spacing:0.8px">2025-09-07 01:47:47</span></div>
<span class="t" style="left:613px;top:392px;"><span class="c">产品描述</span>16</span>
<span class="t" style="left:733px;top:392px;"><span class="c">库存单位</span>16</span>
<span class="t" style="left:853px;top:392px;">8125</span>
<div style="left:10px;top:432px;width:993px;height:1px;background:#c8c8c8"></div>
<div style="left:1px;top:410px;width:8px;height:22px;background:#f0f0f0"></div>
<div style="left:0px;top:432px;width:10px;height:1px;background:#646464"></div>
<div style="left:130px;top:409px;width:119px;height:23px;background:#0078d7"></div>
<span class="t" style="left:10px;top:416px;width:116px;text-align:right">94.54</span>
<span class="t" style="left:133px;top:416px;color:#fff"><span class="c">产品名称</span>17</span>
<span class="t" style="left:253px;top:416px;">11567</span>
<span class="t" style="left:373px;top:416px;">578</span>
<div style="left:490px;top:414px;width:119px;height:16px;overflow:hidden"><span class="t" style="left:3px;top:2px;word-spacing:0.8px">2025-09-08 04:20:13</span></div>
<span class="t" style="left:613px;top:416px;"><span class="c">产品描述</span>17</span>
<span class="t" style="left:733px;top:416px;"><span class="c">库存单位</span>17</span>
<span class="t" style="left:853px;top:416px;">11567</span>
<div style="left:10px;top:456px;width:993px;height:1px;background:#c8c8c8"></div>
<div style="left:1px;top:434px;width:8px;height:22px;background:#f0f0f0"></div>
<div style="left:0px;top:456px;width:10px;height:1px;background:#646464"></div>
<div style="left:130px;top:433px;width:119px;height:23px;background:#0078d7"></div>
<span class="t" style="left:10px;top:440px;width:116px;text-align:right">23.67</span>
<span class="t" style="left:133px;top:440px;color:#fff"><span class="c">产品名称</span>18</span>
<span class="t" style="left:253px;top:440px;">4376</span>
<span class="t" style="left:373px;top:440px;">380</span>
<div style="left:490px;top:438px;width:119px;height:16px;overflow:hidden"><span class="t" style="left:3px;top:2px;word-spacing:0.8px">2025-09-10 00:57:20</span></div>
<span class="t" style="left:613px;top:440px;"><span class="c">产品描述</span>18</span>
<span class="t" style="left:733px;top:440px;"><span class="c">库存单位</span>18</span>
<span class="t" style="left:853px;top:440px;">4376</span>
<div style="left:10px;top:480px;width:993px;height:1px;background:#c8c8c8"></div>
<div style="left:1px;top:458px;width:8px;height:22px;background:#f0f0f0"></div>
<div style="left:0px;top:480px;width:10px;height:1px;background:#646464"></div>
<div style="left:130px;top:457px;width:119px;height:23px;background:#0078d7"></div>
<span class="t" style="left:10px;top:464px;width:116px;text-align:right">68.97</span>
<span class="t" style="left:133px;top:464px;color:#fff"><span class="c">产品名称</span>19</span>
<span class="t" style="left:253px;top:464px;">6840</span>
<span class="t" style="left:373px;top:464px;">846</span>
<div style="left:490px;top:462px;width:119px;height:16px;overflow:hidden"><span class="t" style="left:3px;top:2px;word-spacing:0.8px">2025-09-11 20:41:44</span></div>
<span class="t" style="left:613px;top:464px;"><span class="c">产品描述</span>19</span>
<span class="t" style="left:733px;top:464px;"><span class="c">库存单位</span>19</span>
<span class="t" style="left:853px;top:464px;">6840</span>
<div style="left:10px;top:504px;width:993px;height:1px;background:#c8c8c8"></div>
<div style="left:1px;top:482px;width:8px;height:22px;background:#f0f0f0"></div>
<div style="left:0px;top:504px;width:10px;height:1px;background:#646464"></div>
<div style="left:130px;top:481px;width:119px;height:23px;background:#0078d7"></div>
<span class="t" style="left:10px;top:488px;width:116px;text-align:right">98.2</span>
<span class="t" style="left:133px;top:488px;color:#fff"><span class="c">产品名称</span>20</span>
<span class="t" style="left:253px;top:488px;">11766</span>
<span class="t" style="left:373px;top:488px;">777</span>
<div style="left:490px;top:486px;width:119px;height:16px;overflow:hidden"><span class="t" style="left:3px;top:2px;word-spacing:0.8px">2025-09-12 21:24:29</span></div>
<span class="t" style="left:613px;top:488px;"><span class="c">产品描述</span>20</span>
<span class="t" style="left:733px;top:488px;"><span class="c">库存单位</span>20</span>
<span class="t" style="left:853px;top:488px;">11766</span>
<div style="left:10px;top:528px;width:993px;height:1px;background:#c8c8c8"></div>
<div style="left:1px;top:506px;width:8px;height:22px;background:#f0f0f0"></div>
<div style="left:0px;top:528px;width:10px;height:1px;background:#646464"></div>
<div style="left:130px;top:505px;width:119px;height:23px;background:#0078d7"></div>
<span class="t" style="left:10px;top:512px;width:116px;text-align:right">37.14</span>
<span class="t" style="left:133px;top:512px;color:#fff"><span class="c">产品名称</span>21</span>
<span class="t" style="left:253px;top:512px;">5875</span>
<span class="t" style="left:373px;top:512px;">880</span>
<div style="left:490px;top:510px;width:119px;height:16px;overflow:hidden"><span class="t" style="left:3px;top:2px;word-spacing:0.8px">2025-09-13 02:26:17</span></div>
<span class="t" style="left:613px;top:512px;"><span class="c">产品描述</span>21</span>
<span class="t" style="left:733px;top:512px;"><span class="c">库存单位</span>21</span>
<span class="t" style="left:853px;top:512px;">5875</span>
<div style="left:10px;top:552px;width:993px;height:1px;background:#c8c8c8"></div>
<div style="left:1px;top:530px;width:8px;height:22px;background:#f0f0f0"></div>
<div style="left:0px;top:552px;width:10px;height:1px;background:#646464"></div>
<div style="left:130px;top:529px;width:119px;height:23px;background:#0078d7"></div>
<span class="t" style="left:10px;top:536px;width:116px;text-align:right">58.06</span>
<span class="t" style="left:133px;top:536px;color:#fff"><span class="c">产品名称</span>22</span>
<span class="t" style="left:253px;top:536px;">5418</span>
<span class="t" style="left:373px;top:536px;">423</span>
<div style="left:490px;top:534px;width:119px;height:16px;overflow:hidden"><span class="t" style="left:3px;top:2px;word-spacing:0.8px">2025-09-13 05:13:35</span></div>
<span class="t" style="left:613px;top:536px;"><span class="c">产品描述</span>22</span>
<span class="t" style="left:733px;top:536px;"><span class="c">库存单位</span>22</span>
<span class="t" style="left:853px;top:536px;">5418</span>
<div style="left:10px;top:576px;width:993px;height:1px;background:#c8c8c8"></div>
<div style="left:1px;top:554px;width:8px;height:22px;background:#f0f0f0"></div>
<div style="left:0px;top:576px;width:10px;height:1px;background:#646464"></div>
<div style="left:130px;top:553px;width:119px;height:23px;background:#0078d7"></div>
<span class="t" style="left:10px;top:560px;width:116px;text-align:right">41.3</span>
<span class="t" style="left:133px;top:560px;color:#fff"><span class="c">产品名称</span>23</span>
<span class="t" style="left:253px;top:560px;">3021</span>
<span class="t" style="left:373px;top:560px;">512</span>
<div style="left:490px;top:558px;width:119px;height:16px;overflow:hidden"><span class="t" style="left:3px;top:2px;word-spacing:0.8px">2025-09-14 11:02:41</span></div>
<span class="t" style="left:613px;top:560px;"><span class="c">产品描述</span>23</span>
<span class="t" style="left:733px;top:560px;"><span class="c">库存单位</span>23</span>
<span class="t" style="left:853px;top:560px;">3021</span>
<span class="t" style="left:10px;top:8px;width:115px;text-align:center"><span class="c">产品价格</span></span>
<span class="t" style="left:130px;top:8px;width:115px;text-align:center"><span class="c">产品名称</span></span>
<span class="t" style="left:250px;top:8px;width:115px;text-align:center"><span class="c">产品类别</span></span>
<span class="t" style="left:370px;top:8px;width:115px;text-align:center"><span class="c">库存数量</span></span>
<span class="t" style="left:490px;top:8px;width:115px;text-align:center"><span class="c">最后更新时间</span></span>
<span class="t" style="left:610px;top:8px;width:115px;text-align:center"><span class="c">产品描述</span></span>
<span class="t" style="left:730px;top:8px;width:115px;text-align:center"><span class="c">库存单位</span></span>
<span class="t" style="left:850px;top:8px;width:115px;text-align:center"><span class="c">供应商</span></span>
</div>
<div style="left:1330px;top:228px;width:16px;height:560px;background:#f0f0f0"></div>
<div style="left:1330px;top:245px;width:15px;height:30px;background:#cdcdcd"></div>
<svg style="left:1330px;top:228px" width="16" height="16"><path d="M5 11 L8 7 L11 11" fill="none" stroke="#606060" stroke-width="2"/></svg>
<svg style="left:1330px;top:770px" width="16" height="16"><path d="M5 7 L8 11 L11 7" fill="none" stroke="#606060" stroke-width="2"/></svg>
<div style="left:326px;top:788px;width:1020px;height:16px;background:#f0f0f0"></div>
<div style="left:343px;top:788px;width:619px;height:16px;background:#cdcdcd"></div>
<svg style="left:325px;top:788px" width="16" height="16"><path d="M11 5 L7 8 L11 11" fill="none" stroke="#606060" stroke-width="2"/></svg>
<svg style="left:1314px;top:788px" width="16" height="16"><path d="M5 5 L9 8 L5 11" fill="none" stroke="#606060" stroke-width="2"/></svg>
<div style="left:208px;top:178px;width:144px;height:174px;background:#f2f2f2;border:1px solid #a0a0a0;box-shadow:2px 2px 2px rgba(0,0,0,.5)"></div>
<div style="left:236px;top:179px;width:1px;height:172px;background:#ebebeb"></div>
<div style="left:211px;top:203px;width:136px;height:23px;background:#91c9f7"></div>
<span class="t" style="left:243px;top:186px;"><span class="c">插入新字段</span></span>
<span class="t" style="left:243px;top:208px;">AI<span class="c">助手</span></span>
<svg style="left:336px;top:209px" width="6" height="9"><path d="M1 0.8 L4.5 4.5 L1 8.2" fill="none" stroke="#333" stroke-width="1.1"/></svg>
<div style="left:239px;top:228px;width:108px;height:1px;background:#d7d7d7"></div>
<span class="t" style="left:243px;top:238px;"><span class="c">批量勾选字段</span></span>
<span class="t" style="left:243px;top:260px;"><span class="c">批量移除勾选</span></span>
<span class="t" style="left:243px;top:282px;"><span class="c">上移</span></span>
<span class="t" style="left:243px;top:303px;"><span class="c">下移</span></span>
<div style="left:239px;top:323px;width:108px;height:1px;background:#d7d7d7"></div>
<span class="t" style="left:243px;top:332px;-webkit-text-stroke:0.45px #000">属性</span>
<div style="left:346px;top:200px;width:132px;height:72px;background:#f2f2f2;border:1px solid #a0a0a0;box-shadow:2px 2px 2px rgba(0,0,0,.5)"></div>
<div style="left:376px;top:201px;width:1px;height:70px;background:#ebebeb"></div>
<div style="left:349px;top:247px;width:127px;height:22px;background:#91c9f7"></div>
<span class="t" style="left:381px;top:208px;"><span class="c">增加字段</span></span>
<span class="t" style="left:381px;top:230px;"><span class="c">生成注释</span></span>
<span class="t" style="left:381px;top:252px;"><span class="c">生成示例值</span></span>
</body></html>
